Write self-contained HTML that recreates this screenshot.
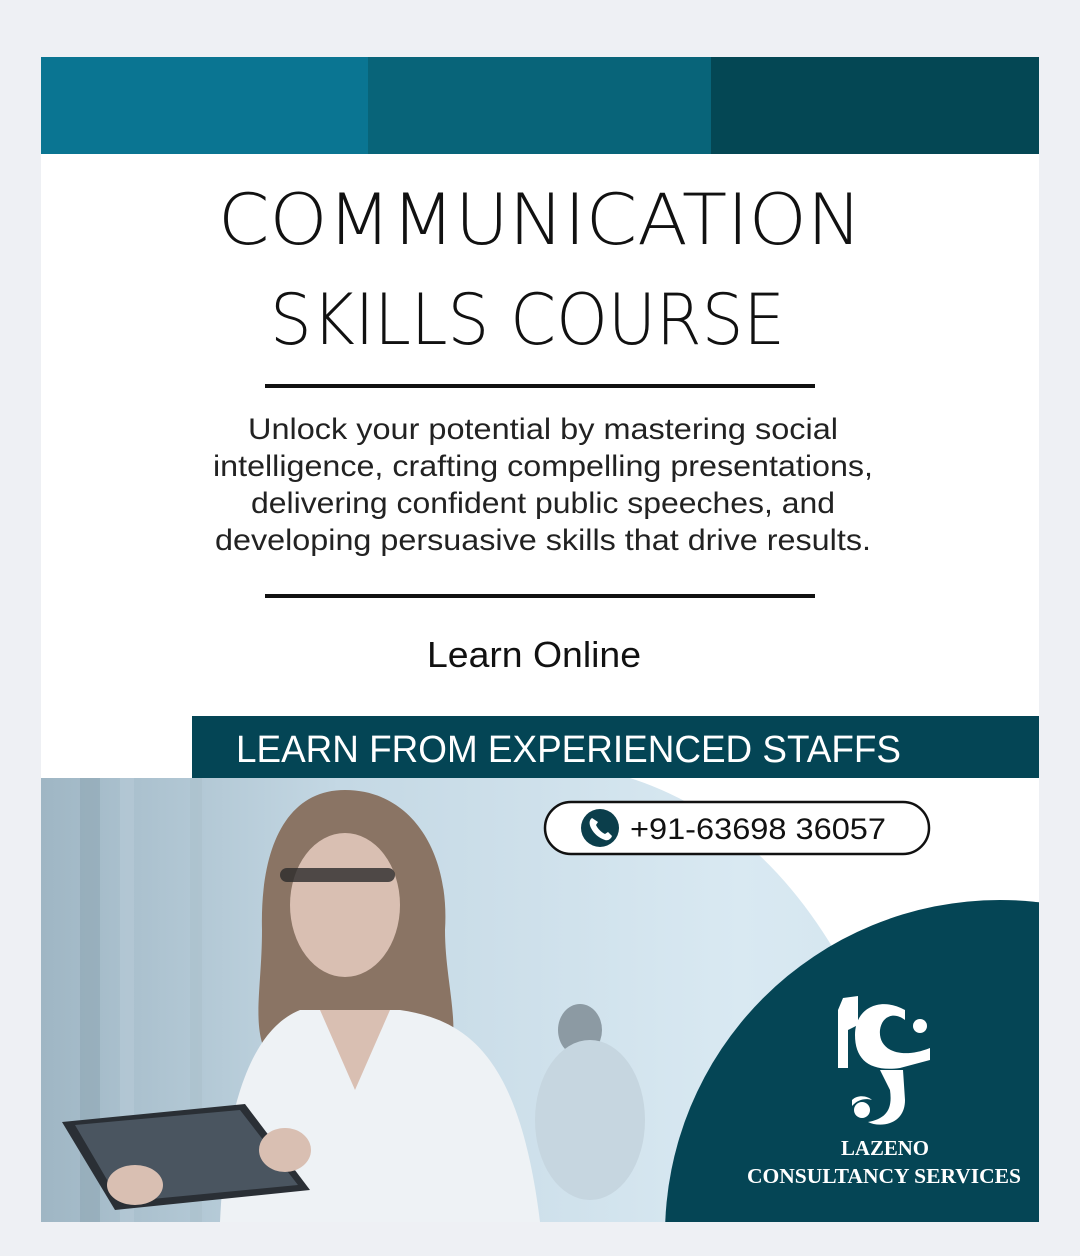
<!DOCTYPE html>
<html><head><meta charset="utf-8"><style>
html,body{margin:0;padding:0;background:#eef0f4;width:1080px;height:1256px;overflow:hidden;}
svg{display:block}
</style></head><body>
<svg width="1080" height="1256" viewBox="0 0 1080 1256" xmlns="http://www.w3.org/2000/svg">
<defs>
<clipPath id="card"><rect x="41" y="778" width="998" height="444"/></clipPath>
<clipPath id="photo"><path d="M41 778 L630 778 Q760 820 840 960 L840 1222 L41 1222 Z"/></clipPath>
<linearGradient id="pg" x1="0" y1="0" x2="1" y2="0">
<stop offset="0" stop-color="#9fb6c4"/><stop offset="0.3" stop-color="#c4d8e4"/><stop offset="0.7" stop-color="#d9e9f2"/><stop offset="1" stop-color="#cfe1ec"/></linearGradient>
</defs>
<rect x="0" y="0" width="1080" height="1256" fill="#eef0f4"/>
<rect x="41" y="57" width="998" height="1165" fill="#fff"/>
<rect x="41" y="57" width="328" height="97" fill="#0a7592"/>
<rect x="368" y="57" width="344" height="97" fill="#086479"/>
<rect x="711" y="57" width="328" height="97" fill="#044754"/>
<g font-family="DejaVu Sans, Liberation Sans, sans-serif" font-weight="200" fill="#111">
<text x="218" y="244" font-size="70" textLength="644" lengthAdjust="spacingAndGlyphs">COMMUNICATION</text>
<text x="270" y="344" font-size="70" textLength="515" lengthAdjust="spacingAndGlyphs">SKILLS COURSE</text>
</g>
<rect x="265" y="384" width="550" height="4" fill="#111"/>
<rect x="265" y="594" width="550" height="4" fill="#111"/>
<g font-family="Liberation Sans, sans-serif" font-size="30" fill="#222" text-anchor="middle">
<text x="543" y="439" textLength="590" lengthAdjust="spacingAndGlyphs">Unlock your potential by mastering social</text>
<text x="543" y="476" textLength="660" lengthAdjust="spacingAndGlyphs">intelligence, crafting compelling presentations,</text>
<text x="543" y="513" textLength="584" lengthAdjust="spacingAndGlyphs">delivering confident public speeches, and</text>
<text x="543" y="550" textLength="656" lengthAdjust="spacingAndGlyphs">developing persuasive skills that drive results.</text>
<text x="534" y="667" font-size="36" fill="#111" textLength="214" lengthAdjust="spacingAndGlyphs">Learn Online</text>
</g>
<rect x="192" y="716" width="847" height="62" fill="#044555"/>
<text x="236" y="762" font-family="Liberation Sans, sans-serif" font-size="38" fill="#fff" textLength="665" lengthAdjust="spacingAndGlyphs">LEARN FROM EXPERIENCED STAFFS</text>
<g clip-path="url(#card)">
<g clip-path="url(#photo)">
<rect x="41" y="778" width="998" height="444" fill="url(#pg)"/>
<rect x="80" y="778" width="20" height="444" fill="#8fa6b4" opacity="0.6"/>
<rect x="120" y="778" width="14" height="444" fill="#b5c9d5" opacity="0.7"/>
<rect x="190" y="778" width="12" height="444" fill="#aabfcc" opacity="0.6"/>
<ellipse cx="580" cy="1030" rx="22" ry="26" fill="#8c9aa3"/>
<ellipse cx="590" cy="1120" rx="55" ry="80" fill="#c6d6e0"/>
<path d="M345 790 C285 790 260 850 262 930 C262 990 250 1030 270 1060 L450 1060 C460 1020 445 980 445 930 C450 850 410 790 345 790Z" fill="#8a7464"/>
<ellipse cx="345" cy="905" rx="55" ry="72" fill="#d9bfb2"/>
<rect x="280" y="868" width="115" height="14" rx="7" fill="#2b2b2b" opacity="0.8"/>
<path d="M220 1222 C225 1110 250 1030 300 1010 L400 1010 C470 1020 520 1060 540 1222Z" fill="#eef2f5"/>
<path d="M320 1010 L355 1090 L390 1010Z" fill="#d9bfb2"/>
<path d="M62 1122 L245 1104 L310 1190 L115 1210Z" fill="#2a2f35"/>
<path d="M75 1125 L240 1110 L298 1185 L120 1202Z" fill="#4a5560"/>
<ellipse cx="135" cy="1185" rx="28" ry="20" fill="#d9bfb2"/>
<ellipse cx="285" cy="1150" rx="26" ry="22" fill="#d9bfb2"/>
</g>
<circle cx="1000" cy="1235" r="335" fill="#054555"/>
</g>
<rect x="545" y="802" width="384" height="52" rx="26" fill="#fff" stroke="#111" stroke-width="2.5"/>
<circle cx="600" cy="828" r="19" fill="#0b3e4b"/>
<path d="M592 818 C589 820 589 824 591 828 C594 834 599 838 605 840 C608 841 611 839 612 836 L608 832 L605 834 C601 832 598 829 596 825 L598 822 Z" fill="#fff"/>
<text x="630" y="839" font-family="Liberation Sans, sans-serif" font-size="30" fill="#111" textLength="256" lengthAdjust="spacingAndGlyphs">+91-63698 36057</text>
<g fill="#fff">
<path d="M843 998 L858 996 L858 1025 L848 1030 L848 1068 L838 1068 L838 1010Z"/>
<path d="M905 1010 C880 996 855 1008 855 1035 C855 1060 870 1072 900 1068 L930 1060 L930 1048 C900 1060 878 1050 880 1030 C882 1015 895 1012 905 1020Z"/>
<circle cx="920" cy="1026" r="7"/>
<path d="M880 1070 L903 1070 L905 1100 C905 1125 880 1128 868 1122 C890 1118 892 1105 890 1090Z"/>
<circle cx="862" cy="1110" r="8"/>
<path d="M852 1100 C858 1094 868 1096 872 1100 C866 1098 858 1099 852 1106Z"/>
</g>
<g font-family="Liberation Serif, serif" font-weight="bold" fill="#fff" text-anchor="middle">
<text x="885" y="1155" font-size="21" textLength="88" lengthAdjust="spacingAndGlyphs">LAZENO</text>
<text x="884" y="1183" font-size="21" textLength="274" lengthAdjust="spacingAndGlyphs">CONSULTANCY SERVICES</text>
</g>
</svg>
</body></html>
